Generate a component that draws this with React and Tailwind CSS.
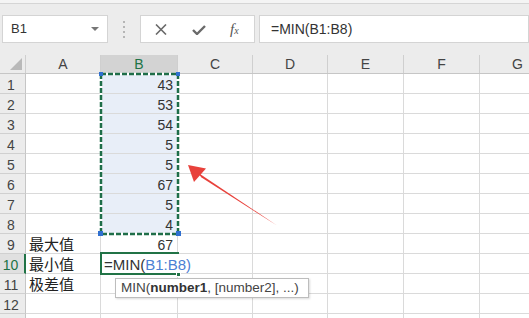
import React from 'react'

const cols = [
  { key: 'A', w: 'w-[75px]' },
  { key: 'B', w: 'w-[77px]' },
  { key: 'C', w: 'w-[75px]' },
  { key: 'D', w: 'w-[75px]' },
  { key: 'E', w: 'w-[76px]' },
  { key: 'F', w: 'w-[76px]' },
  { key: 'G', w: 'w-[76px]' },
]

const rows = [
  { n: 1, b: 43 },
  { n: 2, b: 53 },
  { n: 3, b: 54 },
  { n: 4, b: 5 },
  { n: 5, b: 5 },
  { n: 6, b: 67 },
  { n: 7, b: 5 },
  { n: 8, b: 4 },
  { n: 9, a: '最大值', b: 67 },
  { n: 10, a: '最小值', formula: true },
  { n: 11, a: '极差值' },
  { n: 12 },
  { n: 13, hide: true },
]

function FormulaBar() {
  return (
    <div className="w-full h-[55px] bg-[#ececec] flex flex-col">
      <div className="h-[3px] bg-[#f4f4f4]"></div>
      <div className="h-px bg-[#d5d5d5]"></div>
      <div className="flex items-start pt-[11px] pl-[2px]">
        <div className="w-[106px] h-[28px] bg-white border border-[#d4d4d4] flex items-center justify-between pl-[8px] pr-[8px]">
          <span className="text-[13px] text-[#333]">B1</span>
          <span className="w-0 h-0 border-l-[4px] border-r-[4px] border-t-[4px] border-l-transparent border-r-transparent border-t-[#777]"></span>
        </div>
        <div className="w-[32px] h-[28px] flex flex-col items-center justify-center gap-[3px]">
          <span className="w-[2px] h-[2px] bg-[#b5b5b5]"></span>
          <span className="w-[2px] h-[2px] bg-[#b5b5b5]"></span>
          <span className="w-[2px] h-[2px] bg-[#b5b5b5]"></span>
          <span className="w-[2px] h-[2px] bg-[#b5b5b5]"></span>
        </div>
        <div className="w-[115px] h-[28px] bg-white border border-[#d4d4d4] flex items-center">
          <svg width="12" height="11" viewBox="0 0 12 11" className="ml-[14px]">
            <path d="M1 0.5 L11 10.5 M11 0.5 L1 10.5" stroke="#6a6a6a" strokeWidth="1.6" fill="none" />
          </svg>
          <svg width="14" height="10" viewBox="0 0 14 10" className="ml-[25px] mt-[2px]">
            <path d="M1 5 L5 9 L13 1" stroke="#6a6a6a" strokeWidth="2.4" fill="none" />
          </svg>
          <span className="ml-[24px] text-[15px] italic text-[#555] leading-none" style={{ fontFamily: '"Liberation Serif", serif' }}>
            f<span className="text-[10px]">x</span>
          </span>
        </div>
        <div className="ml-[4px] flex-1 h-[28px] bg-white border border-[#d4d4d4] flex items-center pl-[11px]">
          <span className="text-[14px] text-[#333]">=MIN(B1:B8)</span>
        </div>
      </div>
    </div>
  )
}

function HeaderRow() {
  return (
    <div className="flex h-[19px] bg-[#ececec] border-b border-[#c6c6c6]">
      <div className="w-[26px] shrink-0 border-r border-[#cfcfcf] relative">
        <svg width="12" height="12" viewBox="0 0 12 12" className="absolute right-[3px] bottom-[3px]">
          <polygon points="12,0 12,12 0,12" fill="#b9b9b9" />
        </svg>
      </div>
      {cols.map((c) => (
        <div
          key={c.key}
          className={
            c.w +
            ' shrink-0 border-r border-[#cfcfcf] flex items-center justify-center text-[14px] ' +
            (c.key === 'B' ? 'bg-[#d3d3d3] text-[#217346]' : 'text-[#444]')
          }
        >
          {c.key}
        </div>
      ))}
    </div>
  )
}

function Row({ r }) {
  const active = r.n === 10
  const sel = r.n <= 8
  return (
    <div className="flex h-[20px]">
      <div
        className={
          'w-[26px] shrink-0 border-b border-[#d0d0d0] flex items-end justify-center pr-[3px] text-[14px] leading-[16px] ' +
          (active
            ? 'bg-[#e0e0e0] text-[#217346] border-r-2 border-r-[#217346]'
            : 'bg-[#ececec] text-[#444] border-r border-r-[#c6c6c6]')
        }
      >
        {r.hide ? '' : r.n}
      </div>
      <div className="w-[75px] shrink-0 border-r border-b border-[#dadada] flex items-end pl-[3px] text-[15px] leading-[17px] text-[#222]">
        {r.a}
      </div>
      {r.formula ? (
        <div className="w-[77px] shrink-0 border-b border-[#dadada] flex items-end justify-start pl-[3px]">
          <span className="whitespace-nowrap text-[15px] leading-[17px] relative z-10">
            <span className="text-[#333]">=MIN(</span>
            <span className="text-[#4b7fd3]">B1:B8)</span>
          </span>
        </div>
      ) : (
        <div
          className={
            'w-[77px] shrink-0 border-r border-b border-[#dadada] flex items-end justify-end pr-[4px] text-[14px] leading-[16px] text-[#333] ' +
            (sel ? 'bg-[#e8eef8]' : '')
          }
        >
          {r.b}
        </div>
      )}
      {cols.slice(2).map((c) => (
        <div key={c.key} className={c.w + ' shrink-0 border-r border-b border-[#dadada]'}></div>
      ))}
    </div>
  )
}

export default function App() {
  return (
    <div
      className="w-[529px] h-[318px] overflow-hidden bg-white relative"
      style={{ fontFamily: '"Liberation Sans", "Noto Sans CJK SC", sans-serif' }}
    >
      <FormulaBar />
      <div className="w-[600px]">
        <HeaderRow />
        {rows.map((r) => (
          <Row key={r.n} r={r} />
        ))}
      </div>

      {/* copy marquee B1:B8 */}
      <svg className="absolute left-[98px] top-[71px] pointer-events-none" width="84" height="167" viewBox="0 0 84 167">
        <rect x="3" y="3" width="77" height="160" fill="none" stroke="#ffffff" strokeWidth="2.5" />
        <rect x="3" y="3" width="77" height="160" fill="none" stroke="#1f6e49" strokeWidth="2.5" strokeDasharray="5 2" />
        <rect x="1" y="1" width="4" height="4" fill="#2f6fd0" />
        <rect x="78" y="1" width="4" height="4" fill="#2f6fd0" />
        <rect x="0" y="160" width="5" height="5" fill="#2f6fd0" />
        <rect x="78" y="160" width="5" height="5" fill="#2f6fd0" />
      </svg>

      {/* active cell B10 */}
      <div className="absolute left-[100px] top-[252px] w-[79px] h-[23px] border-2 border-r-0 border-[#217346] pointer-events-none"></div>
      <div className="absolute left-[176px] top-[272px] w-[5px] h-[5px] bg-[#217346] border border-white"></div>

      {/* function tooltip */}
      <div className="absolute left-[115px] top-[278px] w-[194px] h-[20px] bg-white border border-[#bdbdbd] shadow-[1px_1px_2px_rgba(0,0,0,0.15)] flex items-center pl-[5px] text-[13.5px] text-[#444] whitespace-nowrap">
        MIN(<span className="font-bold text-[#333]">number1</span>, [number2], ...)
      </div>

      {/* red arrow */}
      <svg className="absolute left-0 top-0 pointer-events-none" width="529" height="318" viewBox="0 0 529 318">
        <polygon points="188,165 206,168.5 194,182" fill="#e8413b" />
        <polygon points="197,172 201.5,177.5 277,225.5" fill="#e8413b" />
      </svg>
    </div>
  )
}
